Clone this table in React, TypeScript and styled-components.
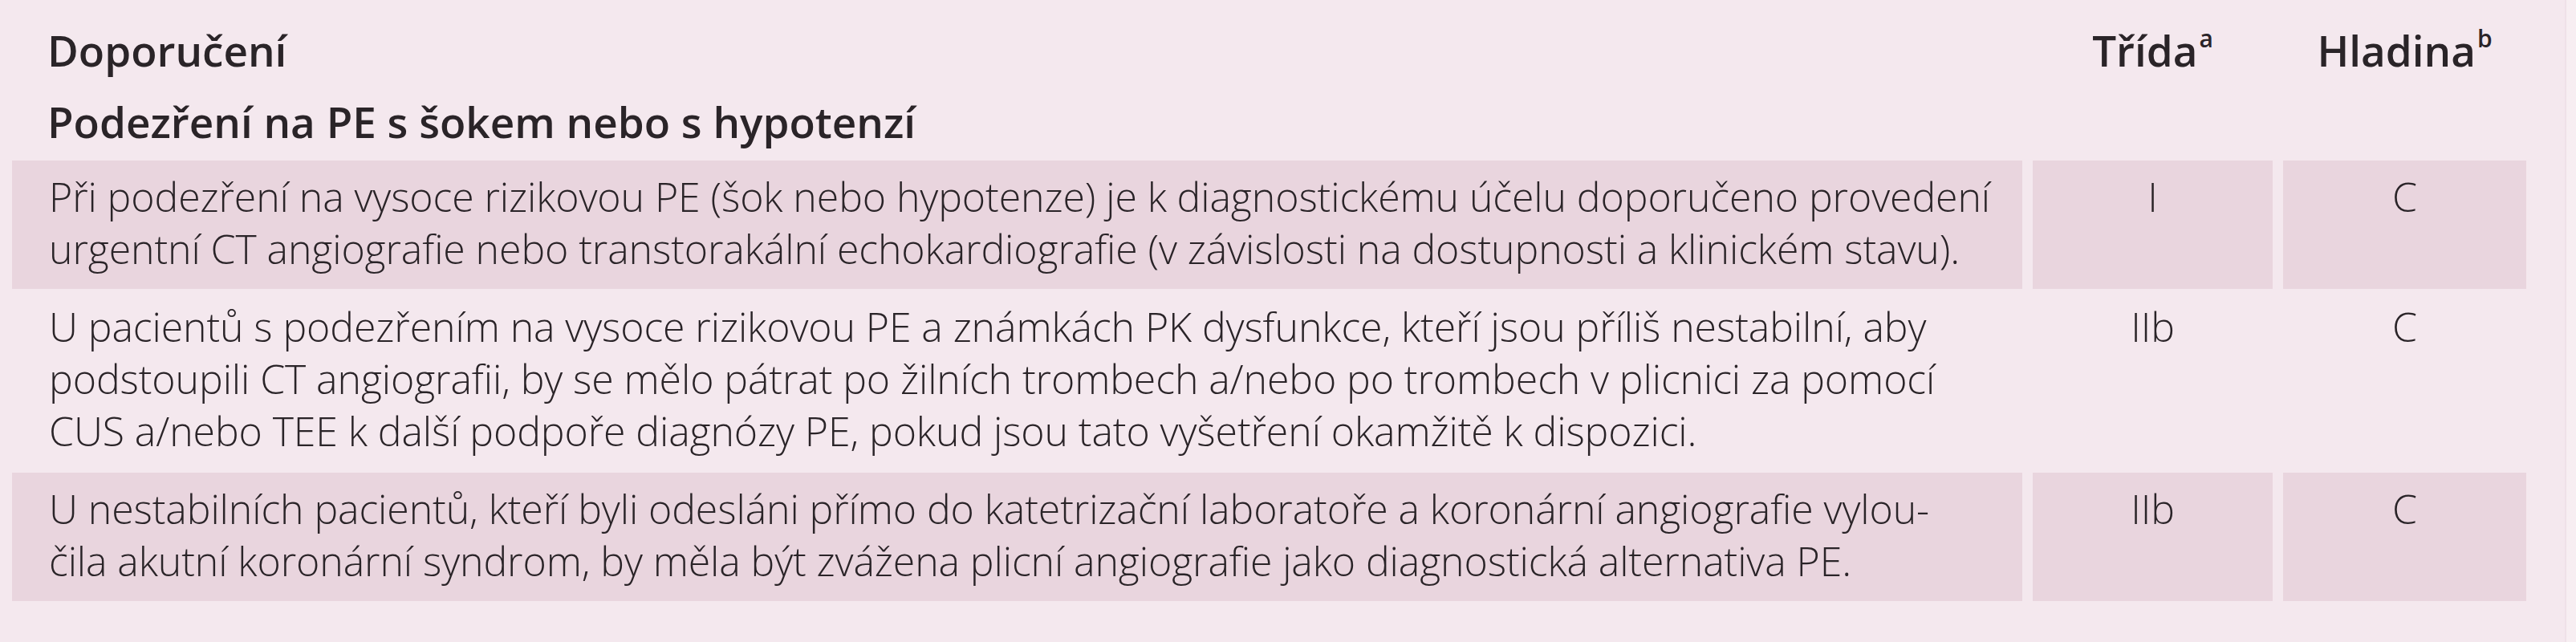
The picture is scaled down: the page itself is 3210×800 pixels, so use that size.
import React from "react";
import styled, { createGlobalStyle } from "styled-components";

const Global = createGlobalStyle`
  body {
    margin: 0;
    background: #f7eef2;
    font-family: "Open Sans", "Noto Sans", sans-serif;
    color: #2a2428;
  }
`;

const COLS = "2505px 299px 303px";

const Page = styled.div`
  width: 3198px;
  height: 800px;
  box-sizing: border-box;
  background: #f4e8ee;
  border-right: 2px solid #efe1e8;
  padding: 31px 0 0 15px;
`;

const HeadRow = styled.div<{ $mt?: number }>`
  display: grid;
  grid-template-columns: ${COLS};
  column-gap: 13px;
  margin-top: ${(p) => p.$mt ?? 0}px;
  font-size: 53px;
  line-height: 64px;
  font-weight: 600;
`;

const HeadCell = styled.div<{ $center?: boolean }>`
  padding-left: ${(p) => (p.$center ? 0 : 44)}px;
  text-align: ${(p) => (p.$center ? "center" : "left")};
  white-space: nowrap;
`;

const Sup = styled.sup`
  font-size: 30px;
  line-height: 0;
  vertical-align: 0;
  position: relative;
  top: -24px;
  margin-left: 2px;
`;

const Body = styled.div`
  display: flex;
  flex-direction: column;
  row-gap: 2px;
  margin-top: 16px;
`;

const Row = styled.div<{ $shaded: boolean }>`
  display: grid;
  grid-template-columns: ${COLS};
  column-gap: 13px;
  font-size: 50px;
  line-height: 65px;
  font-weight: 300;
  letter-spacing: -0.1px;

  > div {
    background: ${(p) => (p.$shaded ? "#e9d5de" : "transparent")};
    padding: 13px 0 17px;
  }
`;

const TextCell = styled.div`
  padding-left: 46px !important;
`;

const Line = styled.span`
  display: block;
  white-space: nowrap;
`;

const ValueCell = styled.div`
  text-align: center;
`;

type Rec = { lines: string[]; cls: string; level: string };

const recs: Rec[] = [
  {
    lines: [
      "Při podezření na vysoce rizikovou PE (šok nebo hypotenze) je k diagnostickému účelu doporučeno provedení",
      "urgentní CT angiografie nebo transtorakální echokardiografie (v závislosti na dostupnosti a klinickém stavu).",
    ],
    cls: "I",
    level: "C",
  },
  {
    lines: [
      "U pacientů s podezřením na vysoce rizikovou PE a známkách PK dysfunkce, kteří jsou příliš nestabilní, aby",
      "podstoupili CT angiografii, by se mělo pátrat po žilních trombech a/nebo po trombech v plicnici za pomocí",
      "CUS a/nebo TEE k další podpoře diagnózy PE, pokud jsou tato vyšetření okamžitě k dispozici.",
    ],
    cls: "IIb",
    level: "C",
  },
  {
    lines: [
      "U nestabilních pacientů, kteří byli odesláni přímo do katetrizační laboratoře a koronární angiografie vylou-",
      "čila akutní koronární syndrom, by měla být zvážena plicní angiografie jako diagnostická alternativa PE.",
    ],
    cls: "IIb",
    level: "C",
  },
];

export default function App() {
  return (
    <>
      <Global />
      <Page>
        <HeadRow>
          <HeadCell>Doporučení</HeadCell>
          <HeadCell $center>
            Třída<Sup>a</Sup>
          </HeadCell>
          <HeadCell $center>
            Hladina<Sup>b</Sup>
          </HeadCell>
        </HeadRow>
        <HeadRow $mt={25}>
          <HeadCell>Podezření na PE s šokem nebo s hypotenzí</HeadCell>
        </HeadRow>
        <Body>
          {recs.map((r, i) => (
            <Row key={i} $shaded={i % 2 === 0}>
              <TextCell>
                {r.lines.map((l, j) => (
                  <Line key={j}>{l}</Line>
                ))}
              </TextCell>
              <ValueCell>{r.cls}</ValueCell>
              <ValueCell>{r.level}</ValueCell>
            </Row>
          ))}
        </Body>
      </Page>
    </>
  );
}
